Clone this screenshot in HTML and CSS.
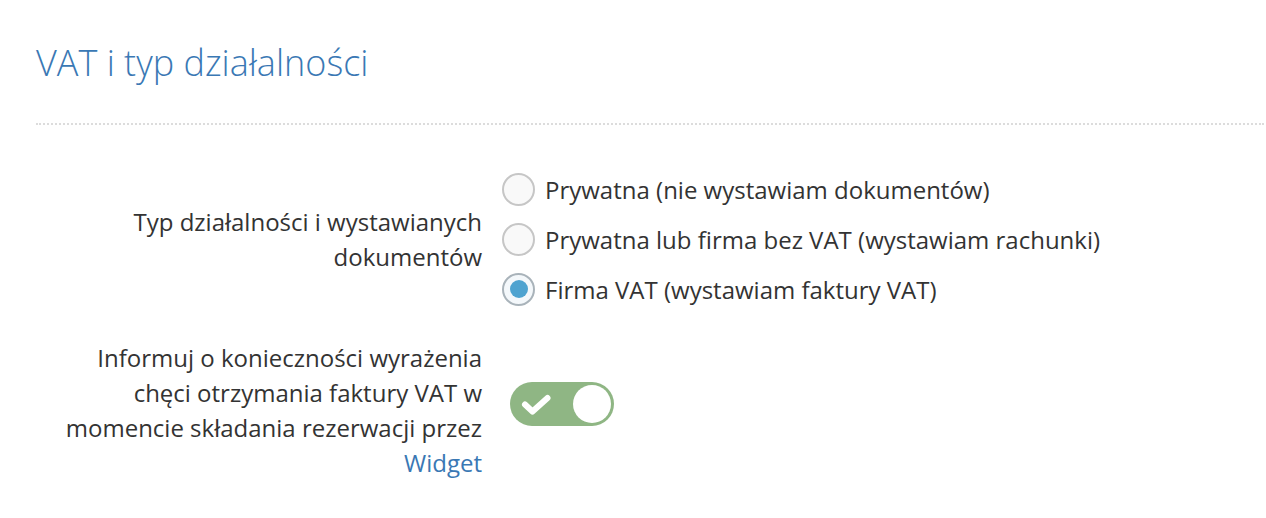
FILE: index.html
```html
<!DOCTYPE html>
<html lang="pl">
<head>
<meta charset="utf-8">
<link rel="stylesheet" href="styles.css">
</head>
<body>
<div class="page">
  <h2 class="title">VAT i typ działalności</h2>
  <div class="divider"></div>
  <div class="row row-type">
    <div class="label">Typ działalności i wystawianych dokumentów</div>
    <div class="control radios">
      <label class="radio"><span class="dot"></span><span>Prywatna (nie wystawiam dokumentów)</span></label>
      <label class="radio"><span class="dot"></span><span>Prywatna lub firma bez VAT (wystawiam rachunki)</span></label>
      <label class="radio checked"><span class="dot"></span><span>Firma VAT (wystawiam faktury VAT)</span></label>
    </div>
  </div>
  <div class="row row-toggle">
    <div class="label">Informuj o konieczności wyrażenia chęci otrzymania faktury VAT w momencie składania rezerwacji przez <a class="link" href="#">Widget</a></div>
    <div class="control">
      <div class="toggle">
        <svg class="check" width="34" height="24" viewBox="0 0 34 24"><path d="M6 12.5 L13.5 19.5 L28.5 6" fill="none" stroke="#fff" stroke-width="6" stroke-linecap="round" stroke-linejoin="round"/></svg>
        <span class="knob"></span>
      </div>
    </div>
  </div>
</div>
</body>
</html>
```

FILE: styles.css
```css
* { box-sizing: border-box; }
html, body { margin: 0; padding: 0; background: #fff; }
body {
  font-family: "Open Sans", "Liberation Sans", sans-serif;
  color: #333;
  font-size: 24px;
  line-height: 35px;
}
.page { padding: 0 2px 0 36px; }
.title {
  margin: 43px 0 0 0;
  font-size: 36px;
  line-height: 40px;
  font-weight: 300;
  color: #3a78b4;
}
.divider {
  margin-top: 40px;
  border-top: 2px dotted #dcdcdc;
}
.row {
  display: flex;
  gap: 20px;
}
.label {
  width: 446px;
  padding-left: 20px;
  flex: none;
  text-align: right;
}
.row-type {
  margin-top: 39px;
  align-items: center;
}
.radios { display: flex; flex-direction: column; }
.radio {
  height: 50px;
  display: flex;
  align-items: center;
  gap: 10px;
}
.dot {
  width: 33px;
  height: 33px;
  border-radius: 50%;
  border: 2px solid #c6c6c6;
  background: #f9f9f9;
  flex: none;
  display: flex;
  align-items: center;
  justify-content: center;
}
.radio.checked .dot { border-color: #a9b3ba; background: #f4f8fb; }
.radio.checked .dot::after {
  content: "";
  width: 18px;
  height: 18px;
  border-radius: 50%;
  background: #4ea3d0;
}
.row-toggle { margin-top: 26px; }
.link { color: #3a78b4; text-decoration: none; }
.toggle {
  margin-top: 42px;
  margin-left: 8px;
  width: 104px;
  height: 44px;
  border-radius: 22px;
  background: #8fb684;
  display: flex;
  align-items: center;
  justify-content: space-between;
  padding: 0 3px 0 9px;
}
.check { display: block; }
.knob {
  width: 38px;
  height: 38px;
  border-radius: 50%;
  background: #fff;
}
```
